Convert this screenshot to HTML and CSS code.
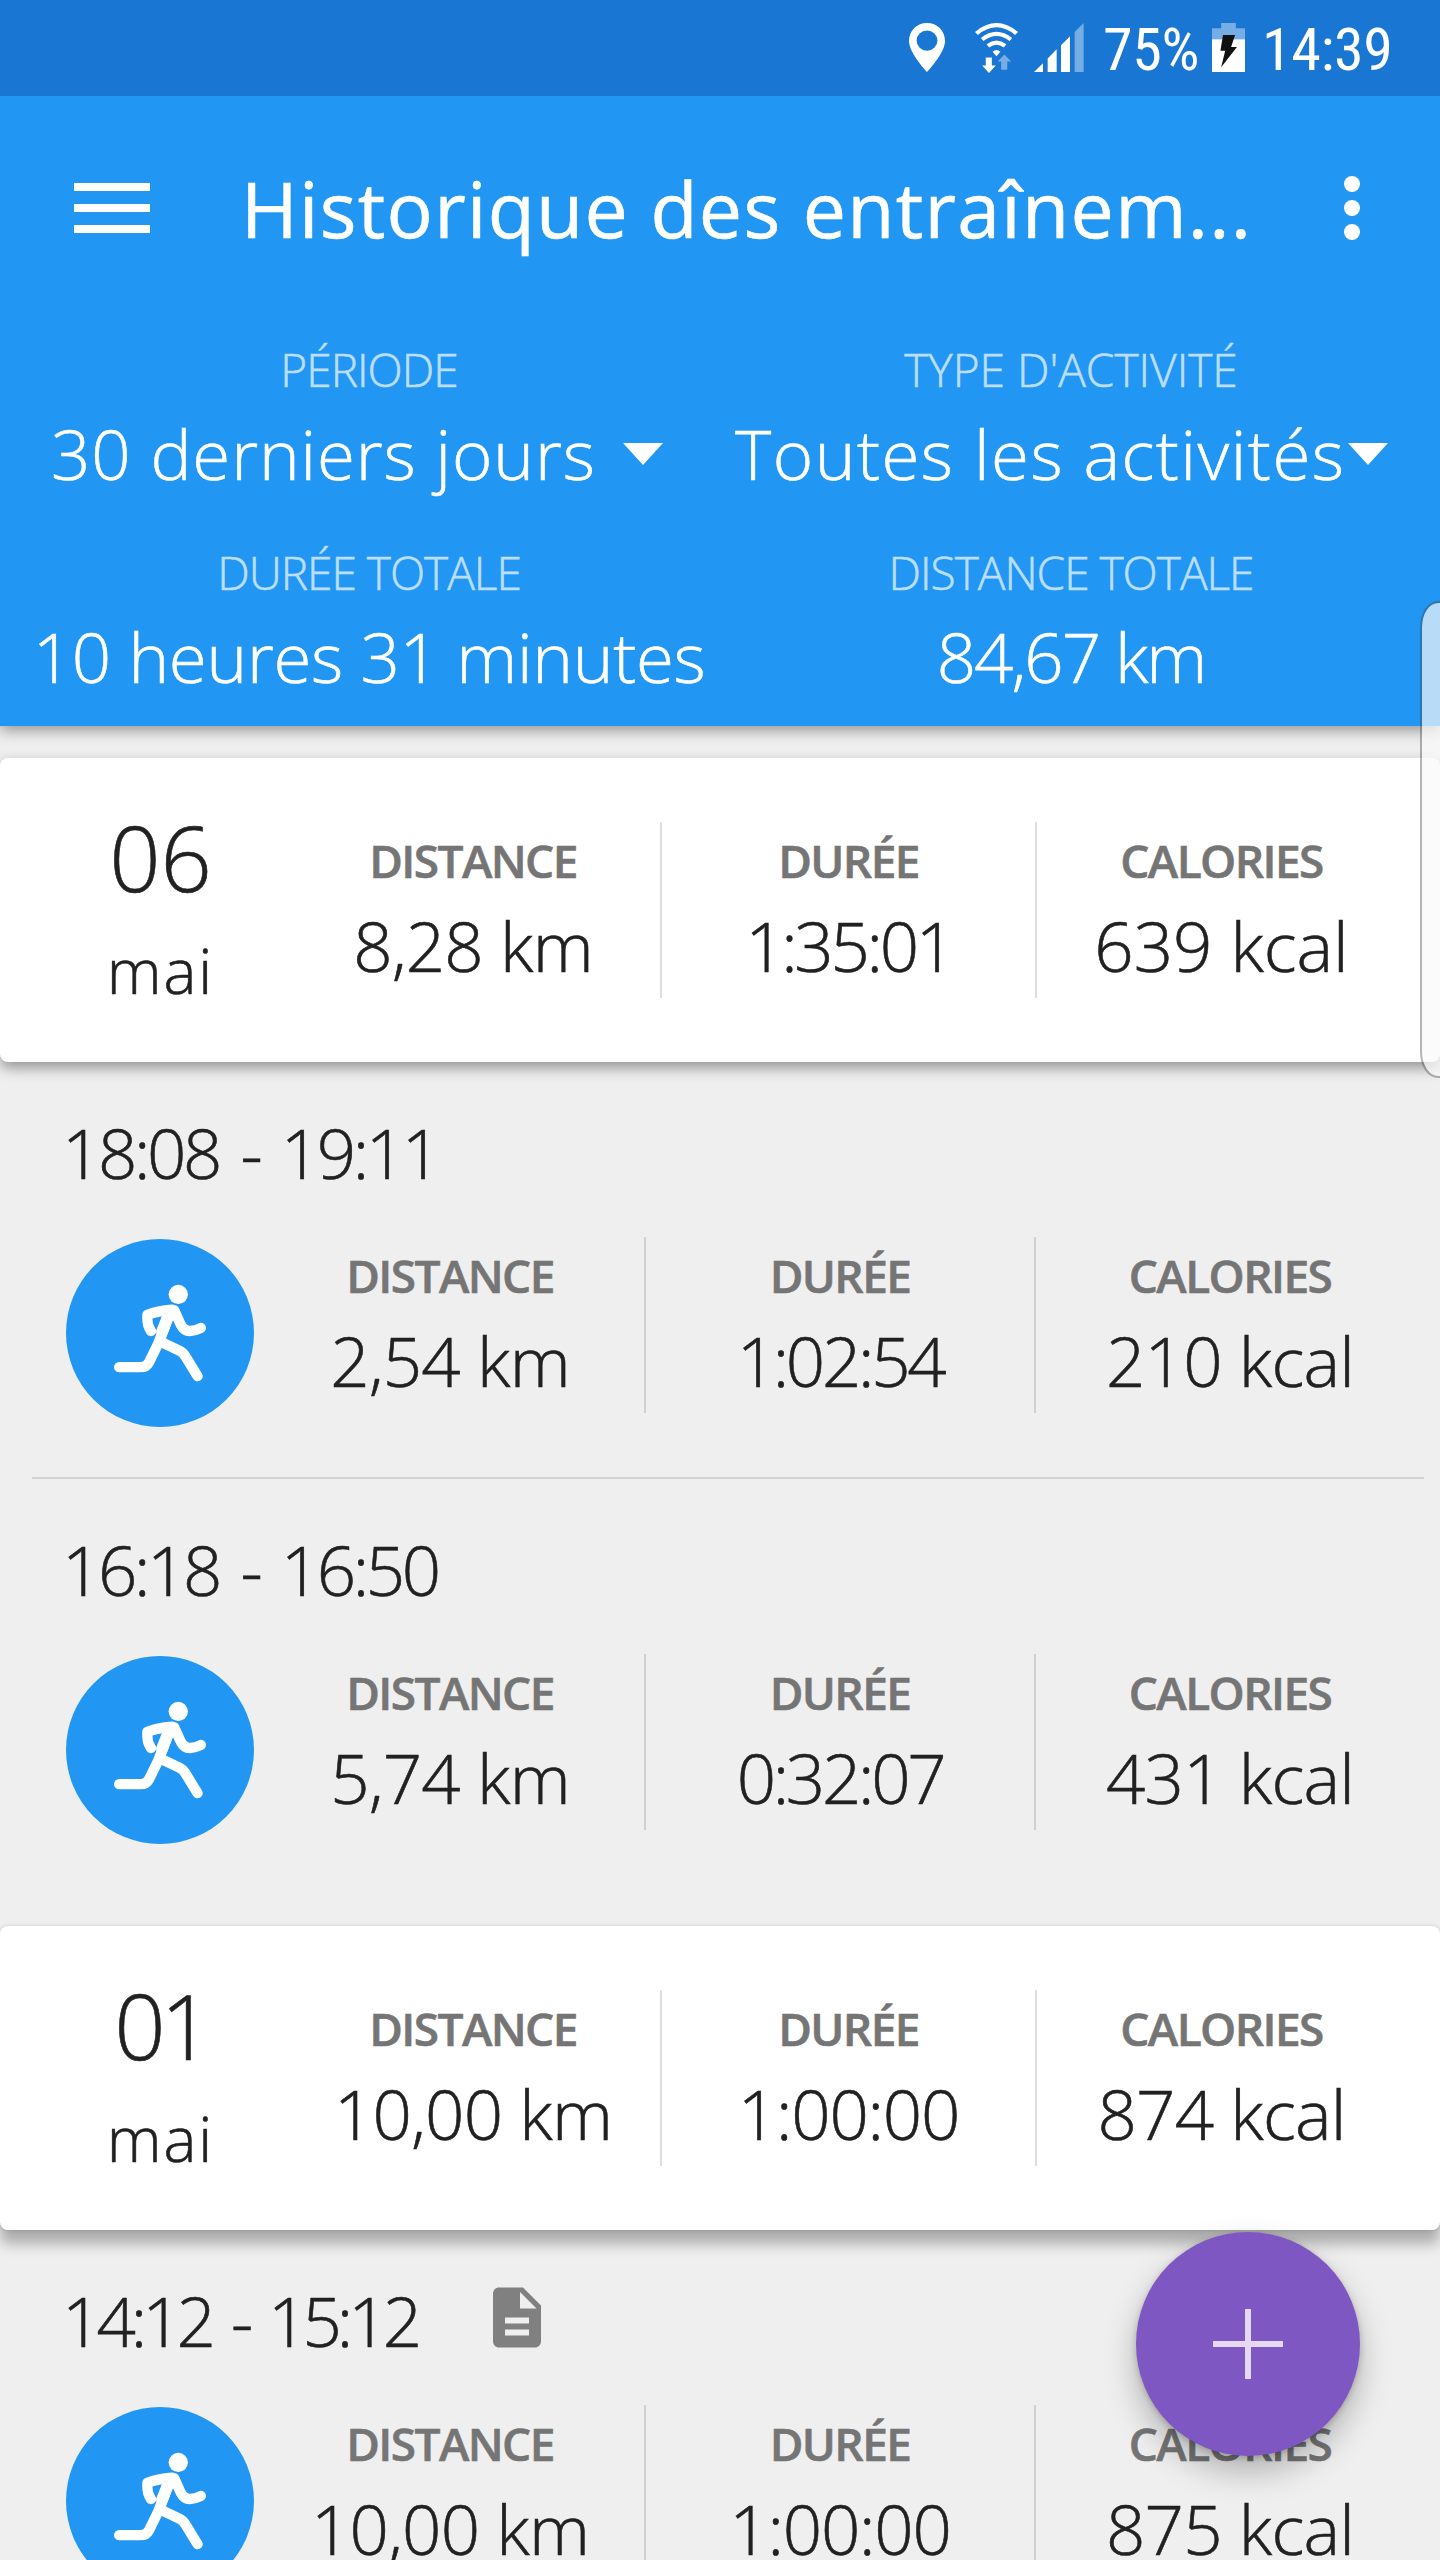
FILE: index.html
```html
<!DOCTYPE html>
<html lang="fr">

<head>
    <meta charset="utf-8">
    <title>Historique des entraînements</title>
    <link rel="stylesheet" href="styles.css">
</head>

<body>
    <svg class="defs">
        <symbol id="runner" viewBox="48 55 564 566">
            <circle cx="385" cy="222" r="29" fill="#fff" />
            <g fill="none" stroke="#fff" stroke-width="31" stroke-linecap="round" stroke-linejoin="round">
                <path d="M303 332Q290 315 292 283Q322 272 366 268" />
                <path d="M373 270L392 312Q402 332 420 332Q436 332 453 323" />
                <path d="M207 441H272Q289 441 297 426L324 371L358 284" />
                <path d="M336 366L388 391Q400 397 407 409L443 468" />
            </g>
            <path d="M335 288L318 332L326 380L348 354L370 296L374 262Z" fill="#fff" />
        </symbol>
    </svg>

    <header class="header">
        <div class="status">
            <svg class="pin" viewBox="81 71 100 145" preserveAspectRatio="none">
                <path fill="#fff" fill-rule="evenodd" d="M131 71C103 71 81 93 81 124C81 160 131 216 131 216S181 160 181 124C181 93 159 71 131 71ZM131 93A29 30 0 0 1 131 153A29 30 0 0 1 131 93Z" />
            </svg>
            <svg class="wifi" viewBox="266 68 120 149" preserveAspectRatio="none">
                <g fill="none" stroke="#fff" stroke-width="12">
                    <path d="M270 99Q326 50 382 99" />
                    <path d="M286 117Q326 84 366 117" />
                    <path d="M302 136Q326 117 350 136" />
                </g>
                <path fill="#fff" d="M315 154Q326 143 337 154L326 167Z" />
                <path fill="#fff" d="M296 171H313V195H324L305 217L286 195H296Z" />
                <path fill="#75ade5" d="M339 207H356V183H367L348 162L329 183H339Z" />
            </svg>
            <svg class="signal" viewBox="430 71 139 145" preserveAspectRatio="none">
                <path fill="#fff" d="M430 216L455 190V216ZM468 216V176L493 149V216ZM505 216V137L530 110V216Z" />
                <path fill="#75ade5" d="M543 216V98L568 71V216Z" />
            </svg>
            <span class="percent">75%</span>
            <svg class="battery" viewBox="932 71 90 147" preserveAspectRatio="none">
                <path fill="#75ade5" d="M957 71H997V87H1022V120H932V87H957Z" />
                <path fill="#fff" d="M932 120H1022V218H932Z" />
                <path fill="#111" d="M962 107H995L984 143H1000L957 204L968 154H955Z" />
            </svg>
            <span class="clock">14:39</span>
        </div>

        <div class="toolbar">
            <div class="menu"><i></i><i></i><i></i></div>
            <h1>Historique des entraînem...</h1>
            <div class="more"><i></i><i></i><i></i></div>
        </div>

        <div class="filters">
            <div class="filter">
                <div class="name">PÉRIODE</div>
                <div class="select period"><span>30 derniers jours</span><i class="arrow"></i></div>
            </div>
            <div class="filter">
                <div class="name short">TYPE D'ACTIVITÉ</div>
                <div class="select type"><span>Toutes les activités</span><i class="arrow"></i></div>
            </div>
            <div class="filter">
                <div class="name">DURÉE TOTALE</div>
                <div class="total">10 heures 31 minutes</div>
            </div>
            <div class="filter">
                <div class="name">DISTANCE TOTALE</div>
                <div class="total km">84,67 km</div>
            </div>
        </div>
    </header>

    <main>
        <section class="day">
            <div class="date"><b>06</b><span>mai</span></div>
            <div class="stat"><h3>DISTANCE</h3><p class="distance">8,28 km</p></div>
            <div class="stat"><h3>DURÉE</h3><p class="duration">1:35:01</p></div>
            <div class="stat"><h3>CALORIES</h3><p>639 kcal</p></div>
        </section>

        <article class="session">
            <h2><span>18:08 - 19:11</span></h2>
            <div class="row">
                <svg class="activity"><use href="#runner" /></svg>
                <div class="stat"><h3>DISTANCE</h3><p class="distance">2,54 km</p></div>
                <div class="stat"><h3>DURÉE</h3><p class="duration">1:02:54</p></div>
                <div class="stat"><h3>CALORIES</h3><p class="calories">210 kcal</p></div>
            </div>
        </article>
        <article class="session last">
            <h2><span>16:18 - 16:50</span></h2>
            <div class="row">
                <svg class="activity"><use href="#runner" /></svg>
                <div class="stat"><h3>DISTANCE</h3><p class="distance">5,74 km</p></div>
                <div class="stat"><h3>DURÉE</h3><p class="duration">0:32:07</p></div>
                <div class="stat"><h3>CALORIES</h3><p class="calories">431 kcal</p></div>
            </div>
        </article>

        <section class="day raised">
            <div class="date"><b class="narrow">01</b><span>mai</span></div>
            <div class="stat"><h3>DISTANCE</h3><p class="distance">10,00 km</p></div>
            <div class="stat"><h3>DURÉE</h3><p class="duration wide">1:00:00</p></div>
            <div class="stat"><h3>CALORIES</h3><p class="calories">874 kcal</p></div>
        </section>

        <article class="session">
            <h2>
                <span class="narrow">14:12 - 15:12</span>
                <svg class="note" viewBox="4 2 16 20">
                    <path fill="#808080" fill-rule="evenodd" d="M14 2H6C4.900 2 4 2.900 4 4V20C4 21.100 4.900 22 6 22H18C19.100 22 20 21.100 20 20V8ZM16 18H8V16H16ZM16 14H8V12H16ZM13 9V3.500L18.500 9Z" />
                </svg>
            </h2>
            <div class="row">
                <svg class="activity"><use href="#runner" /></svg>
                <div class="stat"><h3>DISTANCE</h3><p class="distance">10,00 km</p></div>
                <div class="stat"><h3>DURÉE</h3><p class="duration wide">1:00:00</p></div>
                <div class="stat"><h3>CALORIES</h3><p class="calories">875 kcal</p></div>
            </div>
        </article>
    </main>

    <div class="edge"></div>
    <button class="add"></button>
</body>

</html>
```
FILE: styles.css
```css
* {
    box-sizing: border-box;
    margin: 0;
    padding: 0;
}

html,
body {
    height: 2560px;
    overflow: hidden;
}

body {
    position: relative;
    background-color: #efefef;
    color: #212121;
    font-family: "Open Sans", "Noto Sans", sans-serif;
    font-weight: 300;
    white-space: nowrap;
    -webkit-text-stroke: .6px;
}

.defs {
    display: none;
}

.header {
    position: relative;
    height: 726px;
    background-color: #2196f3;
    color: #fff;
    box-shadow: 0 4px 14px rgba(0, 0, 0, .4);
}

/* status bar */
.status {
    display: flex;
    height: 96px;
    padding-left: 909px;
    padding-top: 23px;
    background-color: #1976d2;
    font: 400 60px/54px Roboto, sans-serif;
    font-stretch: 75%;
    letter-spacing: -.4px;
    -webkit-text-stroke: 0;
}

.pin {
    width: 36px;
    height: 49px;
}

.wifi {
    width: 43px;
    height: 50px;
    margin-left: 30px;
}

.signal {
    width: 50px;
    height: 49px;
    margin-left: 16px;
}

.percent {
    width: 108px;
    margin-left: 19px;
}

.battery {
    width: 33px;
    height: 49px;
    margin-left: 1px;
}

.clock {
    margin-left: 17px;
}

/* toolbar */
.toolbar {
    display: flex;
    align-items: center;
    height: 224px;
    padding-left: 74px;
}

.menu {
    display: grid;
    gap: 13px;
    width: 76px;
}

.menu i {
    height: 8px;
    background-color: #fff;
}

.toolbar h1 {
    width: 1100px;
    padding-left: 91px;
    font-size: 77px;
    font-weight: 400;
    letter-spacing: 1.3px;
}

.more {
    display: grid;
    gap: 8px;
    margin-left: 94px;
}

.more i {
    width: 16px;
    height: 16px;
    border-radius: 50%;
    background-color: #fff;
}

/* filters */
.filters {
    display: grid;
    grid-template-columns: 702px 702px;
    row-gap: 34px;
    padding: 18px 18px 16px;
    text-align: center;
}

.name {
    color: #bbdefb;
    font-size: 46px;
    line-height: 62px;
    letter-spacing: -1px;
}

.name.short {
    letter-spacing: 0;
}

.select,
.total {
    font-size: 69px;
    line-height: 107px;
}

.total {
    letter-spacing: -.3px;
}

.total.km {
    letter-spacing: -2px;
}

.select {
    display: flex;
    align-items: center;
    justify-content: space-between;
}

.arrow {
    border: 20px solid transparent;
    border-top: 22px solid #fff;
    border-bottom: 0;
}

.period {
    padding-left: 33px;
    padding-right: 57px;
    letter-spacing: .9px;
}

.type {
    padding-left: 15px;
    padding-right: 34px;
    letter-spacing: 1.5px;
}

/* list */
main {
    padding-top: 32px;
}

.day {
    display: grid;
    grid-template-columns: 253px 374px 375px 371px;
    height: 304px;
    padding: 64px 33px 0;
    border-radius: 8px;
    background-color: #fff;
    box-shadow: 0 6px 14px rgba(0, 0, 0, .38);
}

.raised {
    margin-top: 32px;
    box-shadow: 0 14px 14px rgba(0, 0, 0, .28), 0 0 4px rgba(0, 0, 0, .15);
}

.date {
    display: flex;
    flex-direction: column;
    margin-top: -25px;
    padding-left: 2px;
    text-align: center;
}

.date b {
    font-size: 90px;
    font-weight: 300;
    line-height: 120px;
}

.date .narrow {
    letter-spacing: -5px;
}

.date span {
    font-size: 62px;
    line-height: 106px;
    letter-spacing: 2px;
}

.stat {
    height: 176px;
    text-align: center;
}

.stat + .stat {
    border-left: 2px solid #ddd;
}

.stat h3 {
    color: #757575;
    font-size: 46px;
    font-weight: 600;
    line-height: 76px;
    letter-spacing: -1.6px;
}

.stat p {
    font-size: 69px;
    line-height: 94px;
}

.stat .distance,
.stat .calories {
    letter-spacing: -.8px;
}

.stat .duration {
    letter-spacing: -3.3px;
}

.stat .duration.wide {
    letter-spacing: -1.2px;
}

.session {
    height: 417px;
    margin-left: 32px;
    margin-right: 16px;
    padding-top: 40px;
    border-bottom: 2px solid #d2d2d2;
}

.session.last {
    height: 415px;
    border-bottom: 0;
}

.session .stat + .stat {
    border-color: #d0d0d0;
}

.session h2 {
    display: flex;
    align-items: center;
    height: 100px;
    padding-left: 30px;
    font-size: 69px;
    font-weight: 300;
    letter-spacing: -3.4px;
    word-spacing: 7px;
}

.session h2 .narrow {
    letter-spacing: -5px;
}

.note {
    width: 48px;
    height: 61px;
    margin-left: auto;
    margin-right: 883px;
    margin-top: -6px;
}

.row {
    display: grid;
    grid-template-columns: 224px 388px 390px 390px;
    padding-top: 35px;
}

.activity {
    width: 188px;
    height: 188px;
    margin: 2px 0 0 34px;
    border-radius: 50%;
    background-color: #2196f3;
}

/* floating things */
.edge {
    position: absolute;
    top: 601px;
    right: -4px;
    width: 24px;
    height: 477px;
    border: 2px solid rgba(70, 70, 70, .4);
    border-radius: 18px 0 0 18px / 26px 0 0 26px;
    background-color: rgba(250, 250, 250, .7);
    background-clip: padding-box;
}

.add {
    position: absolute;
    top: 2232px;
    left: 1136px;
    width: 224px;
    height: 224px;
    border: 0;
    border-radius: 50%;
    background: linear-gradient(#e5d9f5, #e5d9f5) center / 70px 6px no-repeat,
        linear-gradient(#e5d9f5, #e5d9f5) center / 6px 70px no-repeat,
        #7e57c2;
    box-shadow: 0 16px 32px rgba(0, 0, 0, .26), 0 2px 6px rgba(0, 0, 0, .2);
}
```
